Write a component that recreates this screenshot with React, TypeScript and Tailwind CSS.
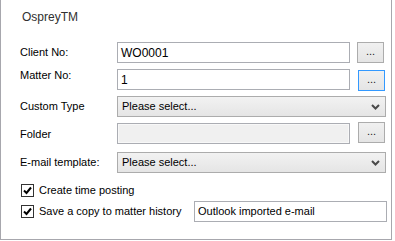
import React from 'react';

const font = { fontFamily: '"Liberation Sans", Arial, sans-serif' };

const EllipsisButton: React.FC<{ focused?: boolean; className?: string }> = ({ focused, className = '' }) => (
  <button
    className={`w-[27px] h-[21px] flex items-center justify-center bg-gradient-to-b from-[#f0f0f0] to-[#e5e5e5] text-[11px] leading-none text-[#202020] pb-[3px] ${
      focused ? 'border border-[#3399ff]' : 'border border-[#acacac]'
    } ${className}`}
  >
    ...
  </button>
);

const Chevron: React.FC = () => (
  <svg width="9" height="6" viewBox="0 0 9 6" className="shrink-0">
    <path d="M1 1 L4.5 4.5 L8 1" fill="none" stroke="#4a4a4a" strokeWidth="2" />
  </svg>
);

const Select: React.FC = () => (
  <div className="w-[269px] h-[21px] flex items-center justify-between pl-[4px] pr-[5px] border border-[#acacac] bg-gradient-to-b from-[#f2f2f2] to-[#e5e5e5] text-[11px] text-black">
    <span>Please select...</span>
    <Chevron />
  </div>
);

const CheckBox: React.FC = () => (
  <div className="w-[13px] h-[13px] border border-[#333333] bg-white flex items-center justify-center shrink-0">
    <svg width="9" height="9" viewBox="0 0 9 9">
      <path d="M1 4.5 L3.5 7 L8 1.5" fill="none" stroke="#000" strokeWidth="2" />
    </svg>
  </div>
);

export default function App() {
  return (
    <div className="w-[395px] h-[241px] bg-white" style={font}>
      <div className="w-[392px] h-[240px] border-l border-r border-b border-[#a7a7ad] pl-[19px] text-[11px] text-black">
        {/* title */}
        <div className="pt-[10px] h-[42px] pl-[2px] text-[12px] leading-[14px] text-[#303030]">OspreyTM</div>

        {/* client no */}
        <div className="flex h-[21px] items-center">
          <div className="w-[97px]">Client No:</div>
          <div className="w-[233px] h-[21px] border border-[#abadb3] bg-white flex items-center pl-[3px] text-[12px]">WO0001</div>
          <EllipsisButton className="ml-[7px]" />
        </div>

        {/* matter no */}
        <div className="flex h-[22px] items-start mt-[6px]">
          <div className="w-[97px] -mt-[2px]">Matter No:</div>
          <div className="w-[233px] h-[21px] border border-[#abadb3] bg-white flex items-center pl-[3px] text-[12px]">1</div>
          <EllipsisButton focused className="ml-[8px] mt-[1px]" />
        </div>

        {/* custom type */}
        <div className="flex h-[21px] items-center mt-[5px]">
          <div className="w-[97px]">Custom Type</div>
          <Select />
        </div>

        {/* folder */}
        <div className="flex h-[22px] items-start mt-[5px]">
          <div className="w-[97px] mt-[4px]">Folder</div>
          <div className="w-[233px] h-[21px] mt-[1px] border border-[#abadb3] bg-[#f0f0f0] shadow-[inset_0_0_0_1px_#f8f8f8]" />
          <EllipsisButton className="ml-[8px]" />
        </div>

        {/* e-mail template */}
        <div className="flex h-[21px] items-center mt-[8px]">
          <div className="w-[97px]">E-mail template:</div>
          <Select />
        </div>

        {/* create time posting */}
        <div className="flex items-center h-[13px] mt-[11px] pl-[1px]">
          <CheckBox />
          <span className="ml-[5px]">Create time posting</span>
        </div>

        {/* save a copy */}
        <div className="flex items-center h-[21px] mt-[4px] pl-[1px]">
          <CheckBox />
          <span className="ml-[5px] w-[155px]">Save a copy to matter history</span>
          <div className="w-[193px] h-[21px] border border-[#abadb3] bg-white flex items-center pl-[3px]">Outlook imported e-mail</div>
        </div>
      </div>
    </div>
  );
}
